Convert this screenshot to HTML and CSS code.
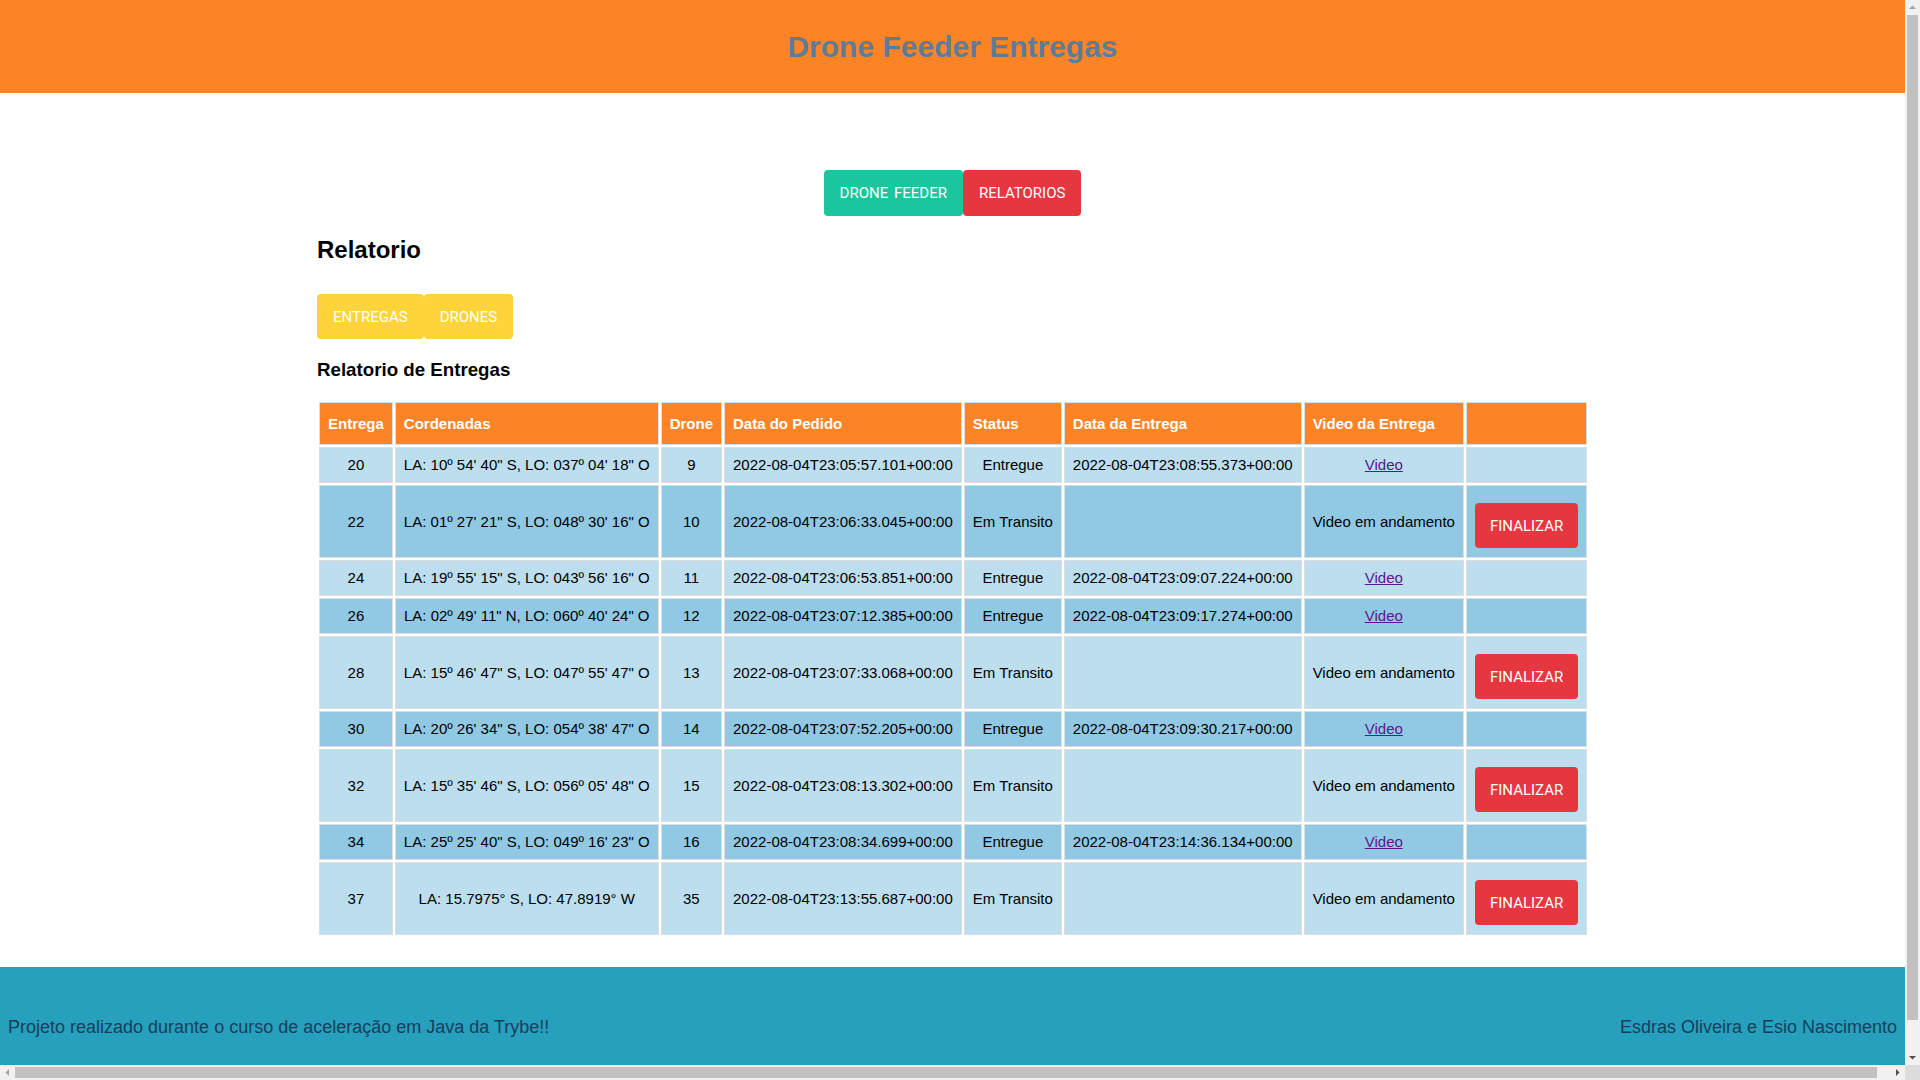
FILE: index.html
```html
<!DOCTYPE html>
<html lang="pt-BR">
<head>
<meta charset="utf-8">
<title>Drone Feeder Entregas</title>
<link rel="stylesheet" href="styles.css">
</head>
<body>
<div class="viewport">
<header class="topbar">
  <h1 class="title">Drone Feeder Entregas</h1>
</header>
<main class="content">
  <nav class="nav">
    <button class="btn btn-teal">DRONE FEEDER</button>
    <button class="btn btn-red">RELATORIOS</button>
  </nav>
  <section class="report">
    <h2 class="report-title">Relatorio</h2>
    <div class="tabs">
      <button class="btn btn-yellow">ENTREGAS</button>
      <button class="btn btn-yellow">DRONES</button>
    </div>
    <h3 class="report-subtitle">Relatorio de Entregas</h3>
    <table class="deliveries">
      <thead>
        <tr>
          <th>Entrega</th>
          <th>Cordenadas</th>
          <th>Drone</th>
          <th>Data do Pedido</th>
          <th>Status</th>
          <th>Data da Entrega</th>
          <th>Video da Entrega</th>
          <th></th>
        </tr>
      </thead>
      <tbody>
        <tr>
          <td>20</td><td>LA: 10º 54' 40" S, LO: 037º 04' 18" O</td><td>9</td><td>2022-08-04T23:05:57.101+00:00</td><td>Entregue</td><td>2022-08-04T23:08:55.373+00:00</td><td><a class="video-link" href="#">Video</a></td><td></td>
        </tr>
        <tr>
          <td>22</td><td>LA: 01º 27' 21" S, LO: 048º 30' 16" O</td><td>10</td><td>2022-08-04T23:06:33.045+00:00</td><td>Em Transito</td><td></td><td>Video em andamento</td><td><button class="btn btn-red btn-finalize">FINALIZAR</button></td>
        </tr>
        <tr>
          <td>24</td><td>LA: 19º 55' 15" S, LO: 043º 56' 16" O</td><td>11</td><td>2022-08-04T23:06:53.851+00:00</td><td>Entregue</td><td>2022-08-04T23:09:07.224+00:00</td><td><a class="video-link" href="#">Video</a></td><td></td>
        </tr>
        <tr>
          <td>26</td><td>LA: 02º 49' 11" N, LO: 060º 40' 24" O</td><td>12</td><td>2022-08-04T23:07:12.385+00:00</td><td>Entregue</td><td>2022-08-04T23:09:17.274+00:00</td><td><a class="video-link" href="#">Video</a></td><td></td>
        </tr>
        <tr>
          <td>28</td><td>LA: 15º 46' 47" S, LO: 047º 55' 47" O</td><td>13</td><td>2022-08-04T23:07:33.068+00:00</td><td>Em Transito</td><td></td><td>Video em andamento</td><td><button class="btn btn-red btn-finalize">FINALIZAR</button></td>
        </tr>
        <tr>
          <td>30</td><td>LA: 20º 26' 34" S, LO: 054º 38' 47" O</td><td>14</td><td>2022-08-04T23:07:52.205+00:00</td><td>Entregue</td><td>2022-08-04T23:09:30.217+00:00</td><td><a class="video-link" href="#">Video</a></td><td></td>
        </tr>
        <tr>
          <td>32</td><td>LA: 15º 35' 46" S, LO: 056º 05' 48" O</td><td>15</td><td>2022-08-04T23:08:13.302+00:00</td><td>Em Transito</td><td></td><td>Video em andamento</td><td><button class="btn btn-red btn-finalize">FINALIZAR</button></td>
        </tr>
        <tr>
          <td>34</td><td>LA: 25º 25' 40" S, LO: 049º 16' 23" O</td><td>16</td><td>2022-08-04T23:08:34.699+00:00</td><td>Entregue</td><td>2022-08-04T23:14:36.134+00:00</td><td><a class="video-link" href="#">Video</a></td><td></td>
        </tr>
        <tr>
          <td>37</td><td>LA: 15.7975° S, LO: 47.8919° W</td><td>35</td><td>2022-08-04T23:13:55.687+00:00</td><td>Em Transito</td><td></td><td>Video em andamento</td><td><button class="btn btn-red btn-finalize">FINALIZAR</button></td>
        </tr>
      </tbody>
    </table>
  </section>
</main>
<footer class="footer">
  <p class="footer-text">Projeto realizado durante o curso de aceleração em Java da Trybe!!</p>
  <p class="footer-text">Esdras Oliveira e Esio Nascimento</p>
</footer>
</div>
<div class="vscroll">
  <span class="sb-btn"><svg width="15" height="15" viewBox="0 0 15 15"><polygon points="4,9 11,9 7.5,5.5" fill="#a3a3a3"/></svg></span>
  <span class="vthumb"></span>
  <span class="sb-fill"></span>
  <span class="sb-btn"><svg width="15" height="15" viewBox="0 0 15 15"><polygon points="4,6 11,6 7.5,9.5" fill="#505050"/></svg></span>
</div>
<div class="hscroll">
  <span class="sb-btn"><svg width="15" height="15" viewBox="0 0 15 15"><polygon points="9,4 9,11 5.5,7.5" fill="#a3a3a3"/></svg></span>
  <span class="hthumb"></span>
  <span class="sb-fill"></span>
  <span class="sb-btn"><svg width="15" height="15" viewBox="0 0 15 15"><polygon points="6,4 6,11 9.5,7.5" fill="#505050"/></svg></span>
</div>
<div class="corner"></div>
</body>
</html>
```

FILE: styles.css
```css
html, body {
  margin: 0;
  padding: 0;
}

body {
  height: 100vh;
  overflow: hidden;
  display: grid;
  grid-template-columns: 1fr 15px;
  grid-template-rows: 1fr 15px;
  font-family: "Liberation Sans", Arial, sans-serif;
  color: #000;
  background: #fff;
}

.viewport {
  min-width: 0;
  min-height: 0;
  overflow: hidden;
}

/* scrollbars */
.vscroll {
  background: #f1f1f1;
  display: flex;
  flex-direction: column;
  min-height: 0;
}

.hscroll {
  background: #f1f1f1;
  display: flex;
  min-width: 0;
}

.sb-btn {
  flex: none;
  width: 15px;
  height: 15px;
  display: flex;
}

.vthumb {
  flex: none;
  height: 1005px;
  margin: 0 2px;
  background: #c1c1c1;
}

.hthumb {
  flex: none;
  width: 1862px;
  margin: 2px 0;
  background: #c1c1c1;
}

.sb-fill {
  flex: 1;
}

.corner {
  background: #dcdcdc;
}

/* page */
.topbar {
  background: #fc8427;
  padding: 30px 0 29px;
  text-align: center;
}

.title {
  margin: 0;
  font-size: 30px;
  line-height: 34px;
  font-weight: bold;
  color: #5e7c95;
}

.content {
  width: 1271px;
  margin: 0 auto;
  padding-top: 77px;
}

.nav {
  display: flex;
  justify-content: center;
}

.btn {
  font-family: Roboto, "Liberation Sans", Arial, sans-serif;
  font-size: 15px;
  word-spacing: 2px;
  height: 45px;
  padding: 0 16px;
  border: none;
  border-radius: 4px;
  color: #fff;
  cursor: pointer;
}

.nav .btn {
  height: 46px;
}

.btn-teal {
  background: #1bc59e;
}

.btn-red {
  background: #e63741;
}

.btn-yellow {
  background: #ffd43a;
}

.report-title {
  font-size: 24px;
  line-height: 27px;
  font-weight: bold;
  margin: 20px 0 0;
}

.tabs {
  display: flex;
  margin-top: 31px;
}

.report-subtitle {
  font-size: 18.72px;
  line-height: 21.5px;
  font-weight: bold;
  margin: 20px 0 19px;
}

.deliveries {
  border-collapse: separate;
  border-spacing: 2px;
  font-size: 15px;
}

.deliveries th,
.deliveries td {
  border: 1px solid #dedede;
}

.deliveries th {
  background: #fc8427;
  color: #fff;
  text-align: left;
  padding: 12px 8px;
  font-weight: bold;
}

.deliveries td {
  padding: 8.5px 8px;
  text-align: center;
  white-space: nowrap;
}

.deliveries tbody tr:nth-child(odd) td {
  background: #bcdeef;
}

.deliveries tbody tr:nth-child(even) td {
  background: #91c9e4;
}

.video-link {
  color: #551a8b;
}

.btn-finalize {
  margin-top: 9px;
  padding: 0 15px;
}

.footer {
  height: 129px;
  box-sizing: border-box;
  margin-top: 30px;
  padding: 50px 8px 0;
  background: #26a0bc;
  display: flex;
  justify-content: space-between;
  align-items: flex-start;
}

.footer-text {
  margin: 0;
  font-size: 18px;
  color: #163f5c;
}
```
